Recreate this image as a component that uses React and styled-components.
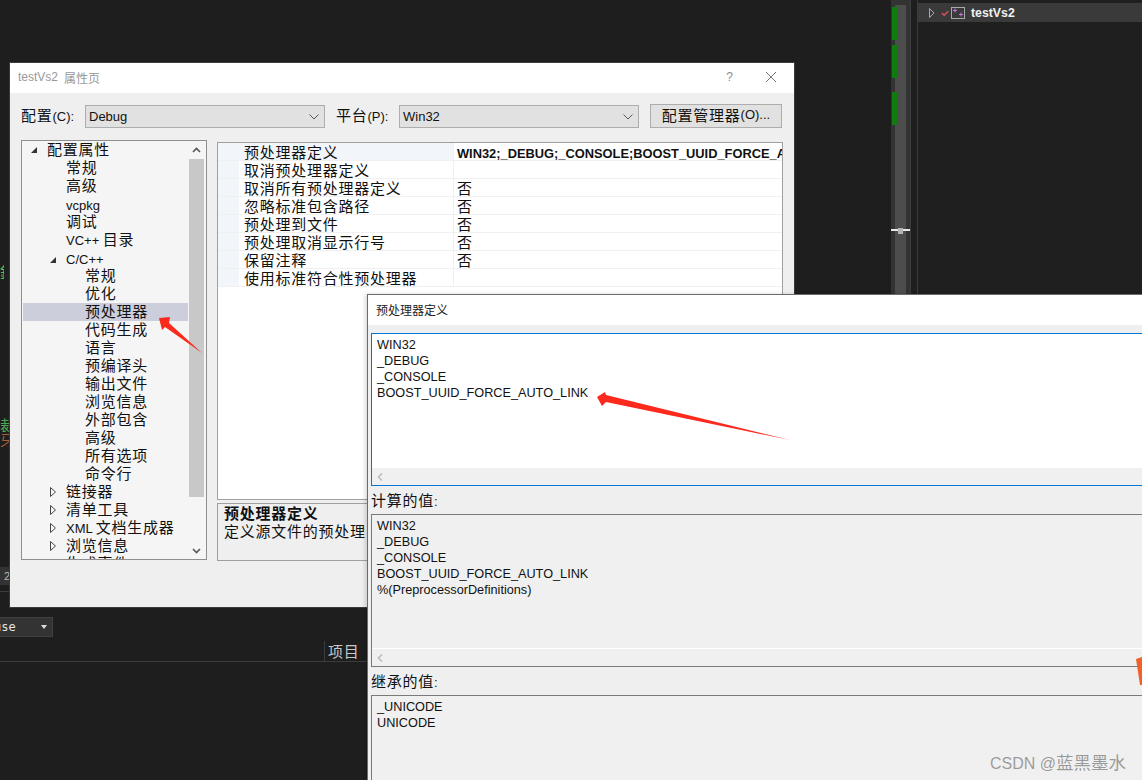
import React from "react";
import styled, { createGlobalStyle } from "styled-components";

const GlobalStyle = createGlobalStyle`
  html, body { margin: 0; padding: 0; background: #1e1e1e; }
  body { font-family: "Liberation Sans", "Noto Sans CJK SC", sans-serif; font-size: 13px; color: #111; }
`;

const hanRe = /([\u4e00-\u9fff]+)/;

// cjk glyphs in the shot run wider than the latin text beside them
const Han = styled.span`
  font-family: "Noto Sans CJK SC", sans-serif;
  font-size: 15px;
  letter-spacing: 0.75px;
`;

const Txt = ({ children }) =>
  children
    .split(hanRe)
    .map((part, i) => (hanRe.test(part) ? <Han key={i}>{part}</Han> : part));

const Desktop = styled.div`
  position: relative;
  width: 1142px;
  height: 780px;
  overflow: hidden;
  background: #1e1e1e;
`;

/* dark ide behind the dialogs */
const Minimap = styled.div`
  position: absolute;
  left: 891px;
  top: 0;
  width: 19px;
  height: 295px;
  background: #333;
  border-right: 1px solid #3c3c3c;
`;
const MinimapTrack = styled.div`
  position: absolute;
  left: 4px;
  top: 5px;
  bottom: 0;
  width: 11px;
  background: #4d4d4d;
`;
const ChangeMark = styled.div`
  position: absolute;
  left: 1px;
  top: ${(p) => p.$top}px;
  width: 5px;
  height: 33px;
  background: #107c10;
`;
const CaretLine = styled.div`
  position: absolute;
  left: 0;
  top: 229px;
  width: 19px;
  height: 2px;
  background: #e8e8e8;
`;
const CaretDot = styled.div`
  position: absolute;
  left: 7px;
  top: 228px;
  width: 5px;
  height: 6px;
  background: #b5b5b5;
`;
const SidePanel = styled.div`
  position: absolute;
  left: 917px;
  top: 0;
  right: 0;
  height: 295px;
  background: #1f1f1f;
  border-left: 1px solid #3a3a3a;
`;
const ProjectRow = styled.div`
  display: flex;
  align-items: center;
  gap: 2px;
  height: 19px;
  margin-top: 3px;
  padding-left: 11px;
  background: #3a3a3a;
  color: #f1f1f1;
  font-weight: bold;
  font-size: 12.3px;
`;
const ProjectName = styled.span`
  margin-left: 4px;
`;
const CodeScrap = styled.div`
  position: absolute;
  left: 0;
  top: ${(p) => p.$top}px;
  width: ${(p) => p.$w}px;
  height: 14px;
  overflow: hidden;
  color: ${(p) => p.$color};
  font-size: 13px;
  line-height: 14px;
  white-space: nowrap;
`;
const OutputTab = styled.div`
  position: absolute;
  left: 0;
  top: 567px;
  width: 10px;
  height: 18px;
  background: #333;
  color: #bbb;
  font-size: 11px;
  line-height: 18px;
  text-align: right;
  overflow: hidden;
`;
const OutputRule = styled.div`
  position: absolute;
  left: 0;
  top: 591px;
  width: 10px;
  height: 1px;
  background: #3c3c3c;
`;
const ConfigDrop = styled.div`
  position: absolute;
  left: 0;
  top: 617px;
  width: 53px;
  height: 20px;
  box-sizing: border-box;
  display: flex;
  align-items: center;
  justify-content: space-between;
  padding-right: 5px;
  background: #333;
  border: 1px solid #3f3f3f;
  border-left: 0;
  color: #e6e6e6;
  font-family: "DejaVu Sans Mono", monospace;
  font-size: 12px;
  overflow: hidden;
`;
const DropText = styled.span`
  margin-left: -6px;
`;
const DropCaret = styled.span`
  width: 0;
  height: 0;
  border: 3.5px solid transparent;
  border-top: 4px solid #ddd;
  border-bottom: 0;
`;
const ListHead = styled.div`
  position: absolute;
  left: 0;
  top: 641px;
  width: 367px;
  height: 20px;
  border-bottom: 1px solid #3c3c3c;
`;
const ListColumn = styled.div`
  position: absolute;
  left: 324px;
  top: 0;
  height: 20px;
  padding-left: 3px;
  border-left: 1px solid #3c3c3c;
  color: #c8c8c8;
  line-height: 20px;
`;

/* property page dialog */
const PropDialog = styled.div`
  position: absolute;
  left: 10px;
  top: 63px;
  width: 784px;
  height: 544px;
  background: #efefef;
  display: flex;
  flex-direction: column;
  box-shadow: 0 0 0 1px #3a3a3a;
`;
const TitleBar = styled.div`
  flex: none;
  height: 30px;
  box-sizing: border-box;
  padding: 0 0 2px 8px;
  background: #fff;
  display: flex;
  align-items: center;
  color: #999;
  font-size: 12px;
`;
const TitleHan = styled.span`
  margin-left: 6px;
  font-family: "Noto Sans CJK SC", sans-serif;
  font-size: 12px;
`;
const TitleButtons = styled.div`
  margin-left: auto;
  display: flex;
  align-items: center;
  gap: 32px;
  padding-right: 17px;
  color: #8a8a8a;
`;
const ConfigRow = styled.div`
  flex: none;
  display: flex;
  align-items: center;
  height: 24px;
  margin-top: 11px;
  padding-left: 11px;
`;
const RowLabel = styled.div`
  width: ${(p) => p.$w}px;
  white-space: nowrap;
  line-height: 24px;
`;
const Select = styled.div`
  width: ${(p) => p.$w}px;
  height: 23px;
  box-sizing: border-box;
  background: #e1e1e1;
  border: 1px solid #adadad;
  display: flex;
  align-items: center;
  justify-content: space-between;
  padding: 1px 5px 0 3px;
  margin-right: 11px;
`;
const PushButton = styled.div`
  width: 132px;
  height: 24px;
  box-sizing: border-box;
  background: #e1e1e1;
  border: 1px solid #adadad;
  padding-bottom: 3px;
  display: flex;
  align-items: center;
  justify-content: center;
`;
const Panels = styled.div`
  flex: none;
  display: flex;
  gap: 10px;
  margin-top: 12px;
  padding-left: 11px;
`;
const TreeBox = styled.div`
  width: 186px;
  height: 420px;
  box-sizing: border-box;
  border: 1px solid #8f8f8f;
  background: #f5f5f5;
  display: flex;
  overflow: hidden;
`;
const TreeList = styled.div`
  flex: 1;
  padding: 0 1px 0 1px;
  min-width: 0;
  overflow: hidden;
`;
const TreeRow = styled.div`
  height: 18px;
  box-sizing: border-box;
  line-height: 18px;
  display: flex;
  align-items: center;
  padding-left: ${(p) => p.$indent}px;
  padding-top: ${(p) => (p.$latin ? 3 : 0)}px;
  background: ${(p) => (p.$selected ? "#cccedb" : "transparent")};
  white-space: nowrap;
`;
const TreeArrow = styled.svg`
  flex: none;
  width: 8px;
  height: 10px;
  margin-right: 9px;
  margin-left: -17px;
`;
const TreeScroll = styled.div`
  flex: none;
  width: 15px;
  margin-right: 2px;
  background: #f5f5f5;
  display: flex;
  flex-direction: column;
`;
const ScrollCap = styled.div`
  flex: none;
  height: ${(p) => p.$h}px;
  display: flex;
  align-items: center;
  justify-content: center;
  margin-top: ${(p) => (p.$push ? "auto" : 0)};
`;
const ScrollThumb = styled.div`
  flex: none;
  height: 338px;
  background: #c8c8c8;
`;
const RightCol = styled.div`
  width: 566px;
  display: flex;
  flex-direction: column;
  gap: 3px;
  margin-top: 2px;
`;
const GridBox = styled.div`
  height: 358px;
  box-sizing: border-box;
  background: #fff;
  border: 1px solid #a0a0a0;
`;
const GridRow = styled.div`
  display: grid;
  grid-template-columns: 236px 1fr;
  height: 18px;
  line-height: 17px;
  box-sizing: border-box;
  border-bottom: 1px solid #f0f0f0;
  background: linear-gradient(to right, #f2f6fb 21px, transparent 21px);
`;
const GridName = styled.div`
  padding-left: 26px;
  white-space: nowrap;
  overflow: hidden;
  background: ${(p) => (p.$active ? "#f2f6fb" : "transparent")};
  border-right: 1px solid #f0f0f0;
`;
const GridValue = styled.div`
  padding-left: 3px;
  padding-top: ${(p) => (p.$bold ? 2 : 0)}px;
  white-space: nowrap;
  overflow: hidden;
  font-weight: ${(p) => (p.$bold ? "bold" : "normal")};
  font-size: ${(p) => (p.$bold ? 12.85 : 13)}px;
`;
const DescBox = styled.div`
  height: 58px;
  box-sizing: border-box;
  border: 1px solid #a0a0a0;
  padding: 0 6px;
  white-space: nowrap;
`;
const DescLine = styled.div`
  height: 18px;
  line-height: 18px;
  font-weight: ${(p) => (p.$bold ? "bold" : "normal")};
`;

/* macro editor dialog on top */
const MacroDialog = styled.div`
  position: absolute;
  left: 367px;
  top: 294px;
  width: 800px;
  height: 500px;
  box-sizing: border-box;
  background: #efefef;
  border: 1px solid #6b6b6b;
  display: flex;
  flex-direction: column;
  box-shadow: -2px 0 4px rgba(0, 0, 0, 0.15);
`;
const MacroTitle = styled.div`
  flex: none;
  height: 30px;
  box-sizing: border-box;
  background: #fff;
  display: flex;
  align-items: center;
  padding: 0 0 2px 8px;
`;
const MacroTitleText = styled.span`
  font-family: "Noto Sans CJK SC", sans-serif;
  font-size: 12px;
  color: #222;
`;
const MacroBody = styled.div`
  display: flex;
  flex-direction: column;
  padding: 8px 0 0 3px;
`;
const ValueBox = styled.div`
  box-sizing: border-box;
  height: ${(p) => p.$h}px;
  background: ${(p) => (p.$focus ? "#fff" : "#f0f0f0")};
  border: ${(p) => (p.$focus ? "1px solid #0078d7" : "1px solid #7a7a7a")};
  display: flex;
  flex-direction: column;
  overflow: hidden;
`;
const ValueLines = styled.div`
  flex: 1;
  padding: 3px 5px;
  line-height: 16px;
  font-size: 12.7px;
  white-space: nowrap;
`;
const HScroll = styled.div`
  flex: none;
  height: 17px;
  background: #f0f0f0;
  border-top: ${(p) => (p.$line ? "1px solid #fff" : "0")};
  display: flex;
  align-items: center;
  padding-left: 5px;
`;
const BoxLabel = styled.div`
  height: 28px;
  box-sizing: border-box;
  padding-top: 2px;
  display: flex;
  align-items: center;
  line-height: 18px;
`;
const Overlay = styled.svg`
  position: absolute;
  left: 0;
  top: 0;
  width: 1142px;
  height: 780px;
  pointer-events: none;
`;
const Watermark = styled.div`
  position: absolute;
  left: 990px;
  top: 752px;
  color: rgba(95, 95, 95, 0.6);
  font-size: 16px;
  line-height: 20px;
  white-space: nowrap;
`;
const WatermarkHan = styled.span`
  font-family: "Noto Sans CJK SC", sans-serif;
  font-size: 17.5px;
`;

const treeItems = [
  { label: "配置属性", indent: 24, arrow: "open" },
  { label: "常规", indent: 43 },
  { label: "高级", indent: 43 },
  { label: "vcpkg", indent: 43, latin: true },
  { label: "调试", indent: 43 },
  { label: "VC++ 目录", indent: 43 },
  { label: "C/C++", indent: 43, arrow: "open", latin: true },
  { label: "常规", indent: 62 },
  { label: "优化", indent: 62 },
  { label: "预处理器", indent: 62, selected: true },
  { label: "代码生成", indent: 62 },
  { label: "语言", indent: 62 },
  { label: "预编译头", indent: 62 },
  { label: "输出文件", indent: 62 },
  { label: "浏览信息", indent: 62 },
  { label: "外部包含", indent: 62 },
  { label: "高级", indent: 62 },
  { label: "所有选项", indent: 62 },
  { label: "命令行", indent: 62 },
  { label: "链接器", indent: 43, arrow: "closed" },
  { label: "清单工具", indent: 43, arrow: "closed" },
  { label: "XML 文档生成器", indent: 43, arrow: "closed" },
  { label: "浏览信息", indent: 43, arrow: "closed" },
  { label: "生成事件", indent: 43, arrow: "closed" },
];

const gridRows = [
  { name: "预处理器定义", value: "WIN32;_DEBUG;_CONSOLE;BOOST_UUID_FORCE_AUTO_LINK;%(PreprocessorDefinitions)", active: true },
  { name: "取消预处理器定义", value: "" },
  { name: "取消所有预处理器定义", value: "否" },
  { name: "忽略标准包含路径", value: "否" },
  { name: "预处理到文件", value: "否" },
  { name: "预处理取消显示行号", value: "否" },
  { name: "保留注释", value: "否" },
  { name: "使用标准符合性预处理器", value: "" },
];

const Chevron = ({ up }) => (
  <svg width="9" height="6" viewBox="0 0 9 6">
    <path d={up ? "M1 5L4.5 1.5L8 5" : "M1 1L4.5 4.5L8 1"} fill="none" stroke="#555" strokeWidth="1.6" />
  </svg>
);

const SelectCaret = () => (
  <svg width="10" height="6" viewBox="0 0 10 6">
    <path d="M0.5 0.5L5 5L9.5 0.5" fill="none" stroke="#555" strokeWidth="1" />
  </svg>
);

const LeftChevron = () => (
  <svg width="6" height="8" viewBox="0 0 6 8">
    <path d="M5 0.5L1.5 4L5 7.5" fill="none" stroke="#bdbdbd" strokeWidth="1.6" />
  </svg>
);

const App = () => {
  return (
    <Desktop>
      <GlobalStyle />
      <Minimap>
        <MinimapTrack />
        <ChangeMark $top={7} />
        <ChangeMark $top={45} />
        <ChangeMark $top={92} />
        <CaretLine />
        <CaretDot />
      </Minimap>
      <SidePanel>
        <ProjectRow>
          <svg width="6" height="10" viewBox="0 0 6 10">
            <path d="M0.5 0.5L5 5L0.5 9.5Z" fill="none" stroke="#a8a8a8" />
          </svg>
          <svg width="8" height="8" viewBox="0 0 9 8" style={{ marginLeft: 4 }}>
            <path d="M1 4L3.5 6.5L8 2" fill="none" stroke="#e0505f" strokeWidth="1.6" />
          </svg>
          <svg width="14" height="12" viewBox="0 0 14 12">
            <rect x="0.5" y="0.5" width="13" height="11" fill="none" stroke="#a8a8a8" />
            <path d="M2 3.5H6M4 1.5V5.5M8 7.5H12M10 5.5V9.5" stroke="#c27bd8" fill="none" />
          </svg>
          <ProjectName>testVs2</ProjectName>
        </ProjectRow>
      </SidePanel>
      <CodeScrap $top={265} $w={4} $color="#4ec94e">
        <Txt>鎖</Txt>
      </CodeScrap>
      <CodeScrap $top={418} $w={10} $color="#4ea84e">
        <Txt>裁转</Txt>
      </CodeScrap>
      <CodeScrap $top={433} $w={10} $color="#a0603a">
        <Txt>牙</Txt>
      </CodeScrap>
      <OutputTab>2</OutputTab>
      <OutputRule />
      <ConfigDrop>
        <DropText>use</DropText>
        <DropCaret />
      </ConfigDrop>
      <ListHead>
        <ListColumn>
          <Txt>项目</Txt>
        </ListColumn>
      </ListHead>

      <PropDialog>
        <TitleBar>
          testVs2<TitleHan>属性页</TitleHan>
          <TitleButtons>
            <span>?</span>
            <svg width="12" height="12" viewBox="0 0 12 12">
              <path d="M1 1L11 11M11 1L1 11" stroke="#777" strokeWidth="1" />
            </svg>
          </TitleButtons>
        </TitleBar>
        <ConfigRow>
          <RowLabel $w={64}>
            <Txt>配置(C):</Txt>
          </RowLabel>
          <Select $w={240}>
            Debug
            <SelectCaret />
          </Select>
          <RowLabel $w={63}>
            <Txt>平台(P):</Txt>
          </RowLabel>
          <Select $w={240}>
            Win32
            <SelectCaret />
          </Select>
          <PushButton>
            <Txt>配置管理器(O)...</Txt>
          </PushButton>
        </ConfigRow>
        <Panels>
          <TreeBox>
            <TreeList>
              {treeItems.map((item, i) => (
                <TreeRow key={i} $indent={item.indent} $selected={item.selected} $latin={item.latin}>
                  {item.arrow === "open" && (
                    <TreeArrow viewBox="0 0 8 10">
                      <path d="M7 2V8H1Z" fill="#333" />
                    </TreeArrow>
                  )}
                  {item.arrow === "closed" && (
                    <TreeArrow viewBox="0 0 8 10">
                      <path d="M1.5 0.5L6.5 5L1.5 9.5Z" fill="none" stroke="#444" />
                    </TreeArrow>
                  )}
                  <span>
                    <Txt>{item.label}</Txt>
                  </span>
                </TreeRow>
              ))}
            </TreeList>
            <TreeScroll>
              <ScrollCap $h={18}>
                <Chevron up />
              </ScrollCap>
              <ScrollThumb />
              <ScrollCap $h={17} $push>
                <Chevron />
              </ScrollCap>
            </TreeScroll>
          </TreeBox>
          <RightCol>
            <GridBox>
              {gridRows.map((row, i) => (
                <GridRow key={i}>
                  <GridName $active={row.active}>
                    <Txt>{row.name}</Txt>
                  </GridName>
                  <GridValue $bold={row.active}>
                    <Txt>{row.value}</Txt>
                  </GridValue>
                </GridRow>
              ))}
            </GridBox>
            <DescBox>
              <DescLine $bold>
                <Txt>预处理器定义</Txt>
              </DescLine>
              <DescLine>
                <Txt>定义源文件的预处理</Txt>
              </DescLine>
            </DescBox>
          </RightCol>
        </Panels>
      </PropDialog>

      <MacroDialog>
        <MacroTitle>
          <MacroTitleText>预处理器定义</MacroTitleText>
        </MacroTitle>
        <MacroBody>
          <ValueBox $h={153} $focus>
            <ValueLines>
              WIN32
              <br />
              _DEBUG
              <br />
              _CONSOLE
              <br />
              BOOST_UUID_FORCE_AUTO_LINK
            </ValueLines>
            <HScroll>
              <LeftChevron />
            </HScroll>
          </ValueBox>
          <BoxLabel>
            <span>
              <Txt>计算的值:</Txt>
            </span>
          </BoxLabel>
          <ValueBox $h={153}>
            <ValueLines>
              WIN32
              <br />
              _DEBUG
              <br />
              _CONSOLE
              <br />
              BOOST_UUID_FORCE_AUTO_LINK
              <br />
              %(PreprocessorDefinitions)
            </ValueLines>
            <HScroll $line>
              <LeftChevron />
            </HScroll>
          </ValueBox>
          <BoxLabel>
            <span>
              <Txt>继承的值:</Txt>
            </span>
          </BoxLabel>
          <ValueBox $h={120}>
            <ValueLines>
              _UNICODE
              <br />
              UNICODE
            </ValueLines>
          </ValueBox>
        </MacroBody>
      </MacroDialog>

      <Overlay viewBox="0 0 1142 780">
        <path d="M159 318L170 317L169 323L202 353L165 327L162 330Z" fill="#fb2a1c" />
        <path d="M597 397L605 392L606 395L790 440L606 402L602 406Z" fill="#fb2a1c" />
        <path d="M1136 659L1142 657V685L1140 685Z" fill="#f0622a" />
      </Overlay>
      <Watermark>
        CSDN @<WatermarkHan>蓝黑墨水</WatermarkHan>
      </Watermark>
    </Desktop>
  );
};

export default App;
